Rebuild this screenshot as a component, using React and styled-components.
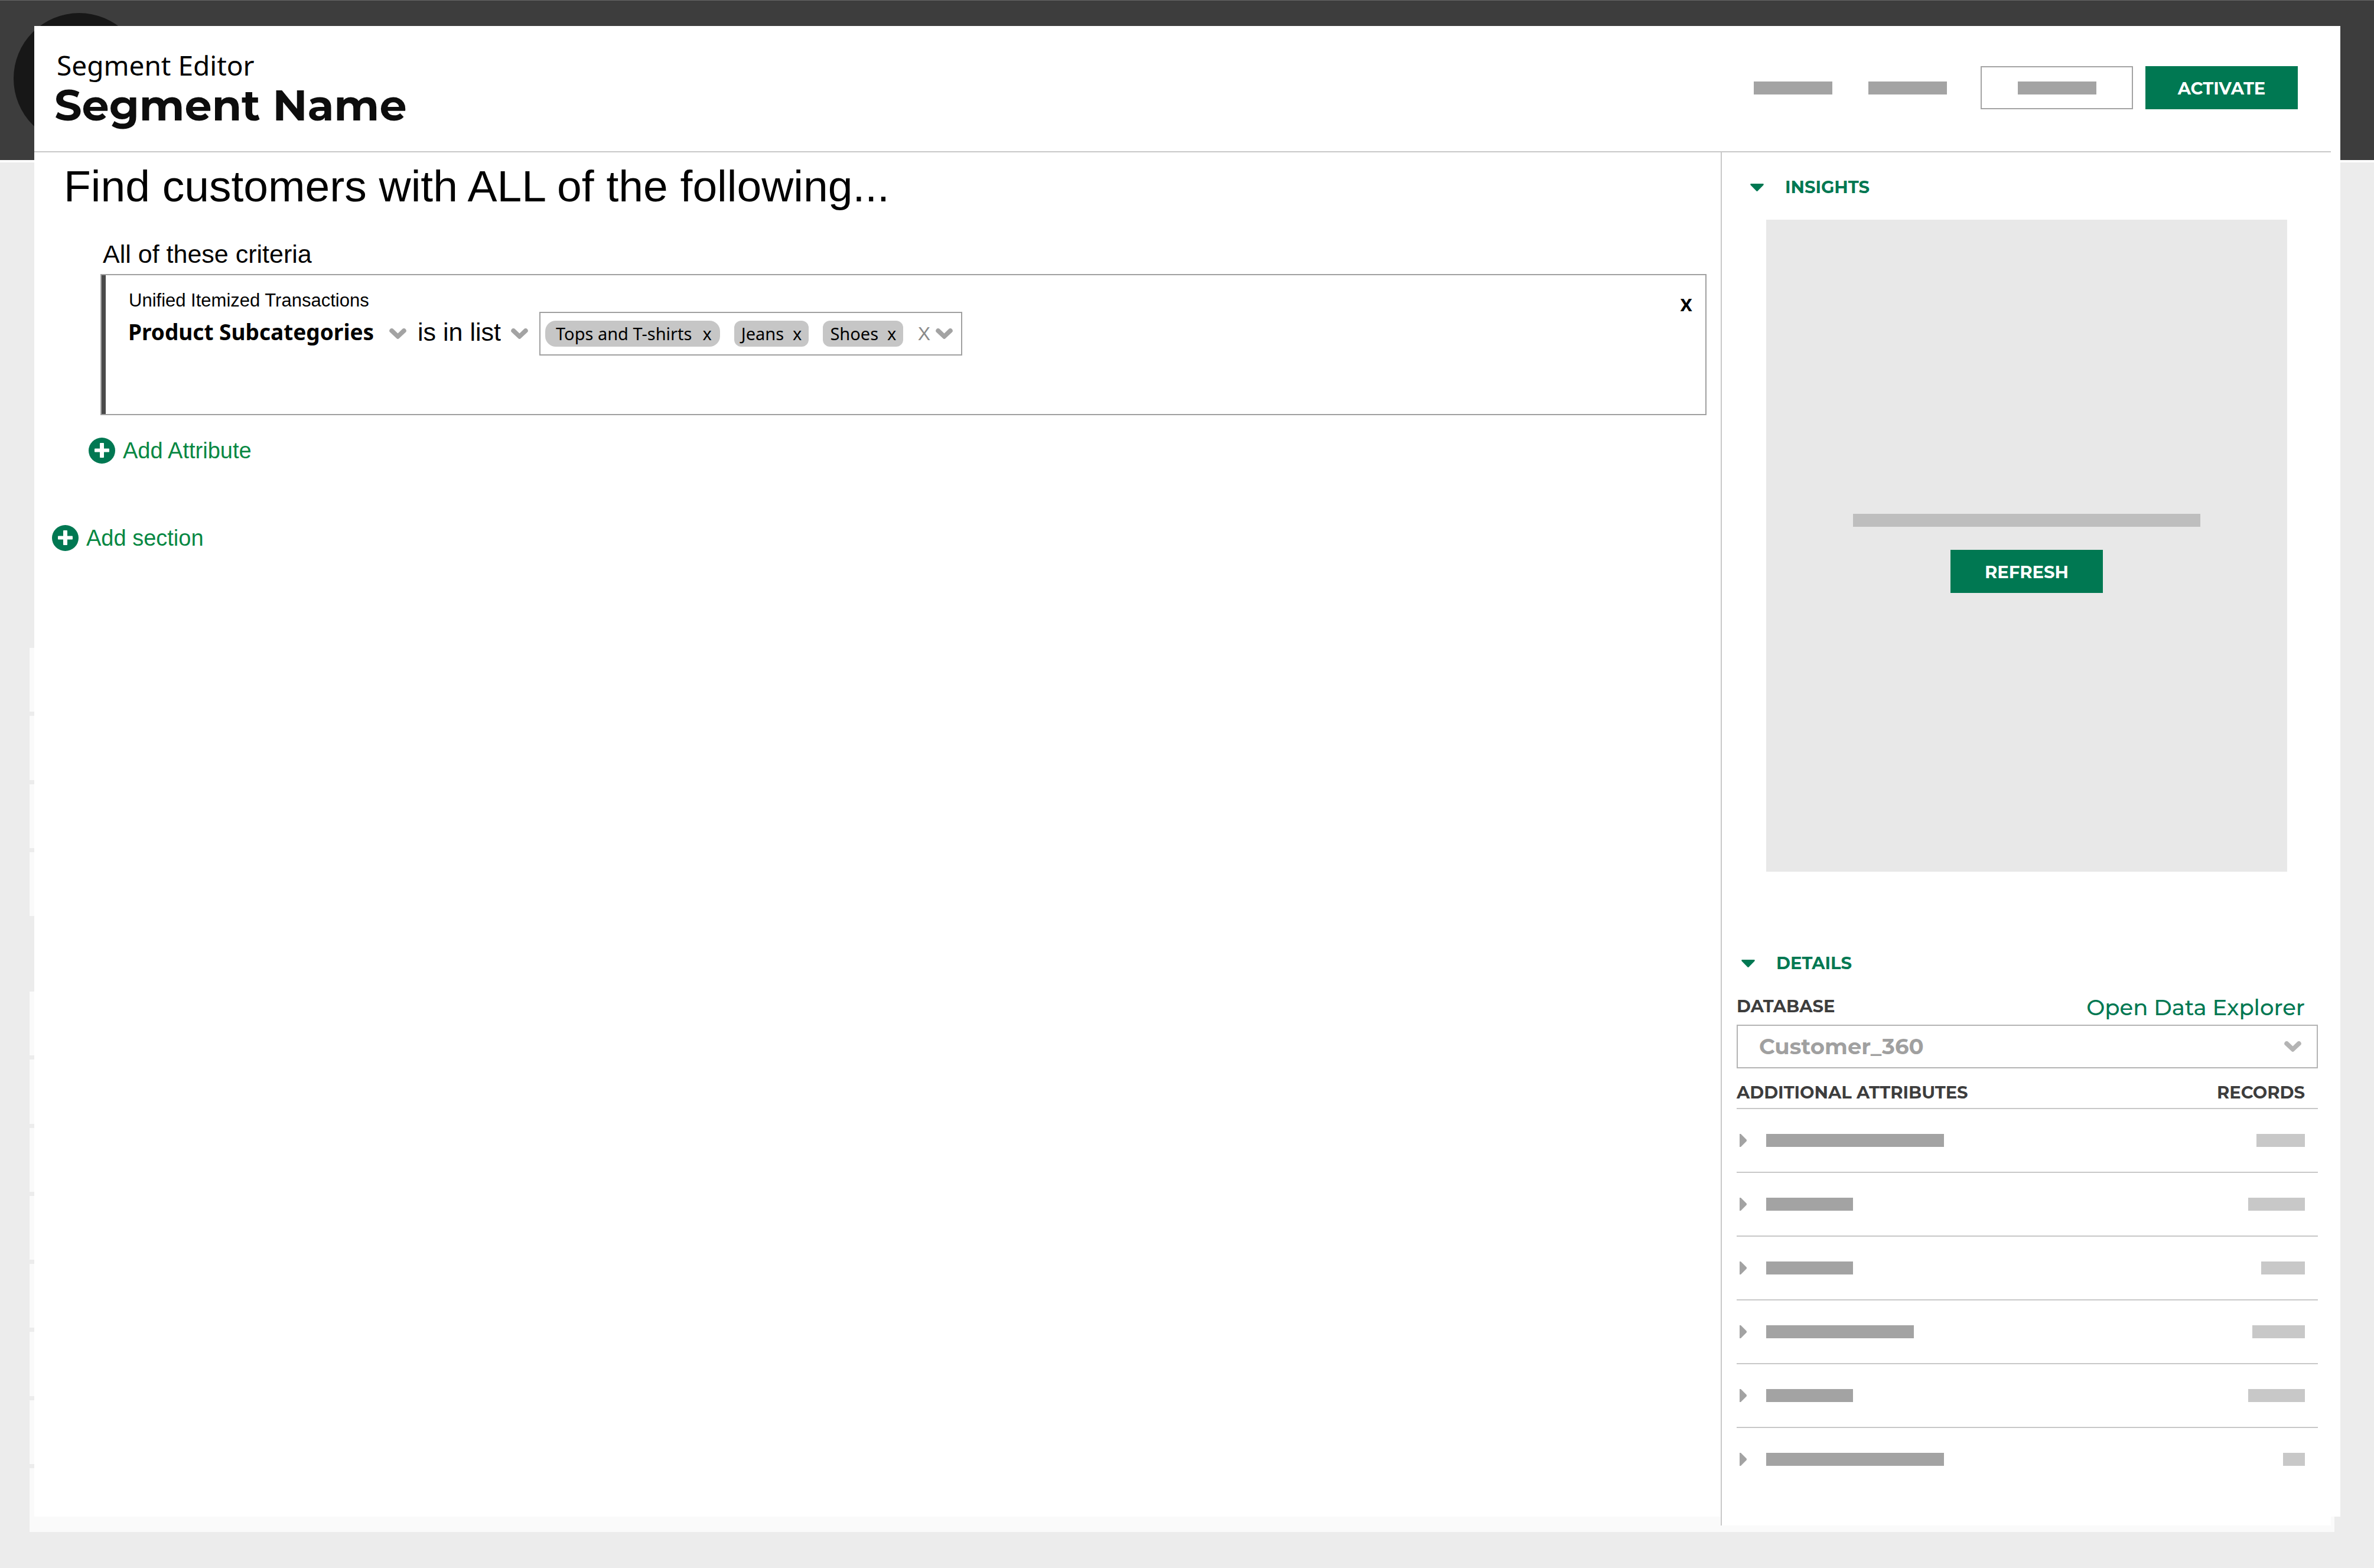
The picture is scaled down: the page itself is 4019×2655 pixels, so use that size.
import React, { useState } from "react";
import styled, { createGlobalStyle } from "styled-components";

const GREEN = "#007852";
const BRAND = `"Montserrat", "Inter", sans-serif`;
const HUMAN = `"Noto Sans", "Open Sans", sans-serif`;
const PLAIN = `"Liberation Sans", Arial, sans-serif`;

const GlobalStyle = createGlobalStyle`
  *, *::before, *::after { box-sizing: border-box; }
  body { margin: 0; background: #ececec; color: #000; font-family: ${PLAIN}; }
  h1, h2, h3, p { margin: 0; }
  button {
    padding: 0;
    border: 0;
    background: none;
    color: inherit;
    cursor: pointer;
  }
  svg { display: block; }
`;

/* ---------- page layers ---------- */

const Page = styled.div`
  display: grid;
  grid-template-columns: minmax(0, 1fr);
  min-height: 100vh;
  > * { grid-area: 1 / 1; }
`;

const Backdrop = styled.div`
  display: flex;
  flex-direction: column;
`;

const TopBar = styled.div`
  height: 275px;
  padding: 21px 23px 0;
  background: #3d3d3d;
  border-top: 1px solid #666;
  border-bottom: 4px solid #fff;
`;

const Avatar = styled.div`
  width: 222px;
  height: 222px;
  border-radius: 50%;
  background: #171717;
`;

const RowGroup = styled.div`
  display: grid;
  grid-auto-rows: 1fr;
  gap: 7px;
  height: ${(p) => p.$height}px;
  margin: ${(p) => p.$before}px 67px 0 50px;
`;

const BackRow = styled.div`
  background: #fafafa;
`;

const Modal = styled.div`
  display: flex;
  flex-direction: column;
  margin: 44px 57px 87px 58px;
  padding-right: 16px;
  background: #fff;
`;

/* ---------- header ---------- */

const Header = styled.header`
  display: flex;
  justify-content: space-between;
  height: 214px;
  padding: 35px 56px 0 34px;
  border-bottom: 2px solid #c8c8c8;
`;

const Eyebrow = styled.p`
  padding-left: 4px;
  font: 400 46px/62px ${HUMAN};
`;

const Title = styled.h1`
  font: 700 73px/74px ${BRAND};
  color: #0d0d0d;
`;

const Actions = styled.div`
  display: flex;
  gap: 21px;
  height: 73px;
  margin-top: 33px;
`;

const LinkActions = styled.div`
  display: flex;
  gap: 61px;
  padding-right: 36px;
`;

const Bar = styled.span`
  display: block;
  width: ${(p) => p.$width}px;
  height: 22px;
  background: ${(p) => p.$color || "#a3a3a3"};
`;

const OutlineButton = styled.button`
  display: flex;
  align-items: center;
  justify-content: center;
  width: 258px;
  border: 2px solid #a3a3a3;
`;

const SolidButton = styled.button`
  width: 258px;
  height: 73px;
  padding-top: 2px;
  background: ${GREEN};
  color: #fff;
  font: 700 29px/40px ${BRAND};
`;

/* ---------- editor ---------- */

const Body = styled.div`
  display: grid;
  grid-template-columns: minmax(0, 1fr) 1033px;
  flex: 1;
`;

const Editor = styled.main`
  padding: 12px 24px 0 0;
`;

const Heading = styled.h2`
  padding-left: 50px;
  font: 400 75px/90px ${PLAIN};
`;

const Section = styled.section`
  margin: 45px 0 104px 112px;
`;

const SectionLabel = styled.h3`
  padding-left: 4px;
  font: 400 43px/50px ${PLAIN};
`;

const Criteria = styled.div`
  display: flex;
  justify-content: space-between;
  align-items: flex-start;
  height: 239px;
  margin: 9px 0 38px;
  padding: 25px 22px 0 45px;
  border: 2px solid #a0a0a0;
  box-shadow: inset 7px 0 0 #4a4a4a;
`;

const Source = styled.p`
  margin-bottom: 1px;
  padding-left: 1px;
  font: 400 31px/36px ${PLAIN};
`;

const Rule = styled.div`
  display: flex;
  align-items: center;
  gap: 19px;
`;

const Picker = styled.label`
  display: grid;
  align-items: center;
  > * { grid-area: 1 / 1; }
  > svg { justify-self: end; pointer-events: none; }
`;

const PickerSelect = styled.select`
  appearance: none;
  margin: 0;
  padding: 0 ${(p) => (p.$strong ? 54 : 46)}px 6px 0;
  border: 0;
  background: none;
  color: #000;
  font: ${(p) => (p.$strong ? `700 37px/60px ${HUMAN}` : `400 43px/60px ${PLAIN}`)};
`;

const TokenField = styled.div`
  display: flex;
  align-items: center;
  gap: 24px;
  min-width: 716px;
  height: 74px;
  padding: 0 14px 0 8px;
  border: 2px solid #a0a0a0;
`;

const Token = styled.span`
  display: flex;
  align-items: center;
  gap: ${(p) => (p.$wide ? 18 : 15)}px;
  height: 44px;
  padding: ${(p) => (p.$wide ? "0 14px 0 18px" : "0 12px")};
  border-radius: ${(p) => (p.$wide ? 18 : 12)}px;
  background: #c6c6c6;
  font: 400 29px/40px ${HUMAN};
`;

const TokenRemove = styled.button`
  font: 400 29px/40px ${HUMAN};
`;

const FieldActions = styled.div`
  display: flex;
  align-items: center;
  gap: 9px;
  margin-left: auto;
`;

const ClearAll = styled.button`
  color: #8a8a8a;
  font: 400 32px/40px ${PLAIN};
`;

const CloseButton = styled.button`
  font: 600 37px/44px ${HUMAN};
`;

const AddButton = styled.button`
  display: flex;
  align-items: center;
  gap: 13px;
  margin-left: ${(p) => p.$indent}px;
  color: #078843;
  font: 400 38px/44px ${PLAIN};
`;

/* ---------- sidebar ---------- */

const Sidebar = styled.aside`
  margin-bottom: -15px;
  padding-top: 39px;
  background: #fff;
  border-left: 2px solid #c8c8c8;
`;

const Toggle = styled.button`
  display: flex;
  align-items: center;
  gap: 36px;
  margin-left: ${(p) => p.$indent}px;
  color: ${GREEN};
  font: 700 29px/40px ${BRAND};
`;

const InsightsPanel = styled.div`
  display: flex;
  flex-direction: column;
  align-items: center;
  gap: 39px;
  height: 1104px;
  margin: 35px 74px 135px 75px;
  padding-top: 498px;
  background: #e8e8e8;
`;

const Details = styled.section`
  padding: 0 22px 0 25px;
`;

const DatabaseHead = styled.div`
  display: flex;
  justify-content: space-between;
  align-items: flex-start;
  margin: 33px 0 7px;
  padding-right: 22px;
`;

const DatabaseLabel = styled.label`
  color: #3d3d3d;
  font: 700 29px/40px ${BRAND};
`;

const ExplorerLink = styled.a`
  color: ${GREEN};
  font: 500 37px/44px ${BRAND};
  text-decoration: none;
`;

const DatabaseField = styled.div`
  display: grid;
  align-items: center;
  > * { grid-area: 1 / 1; }
  > svg { justify-self: end; margin-right: 28px; pointer-events: none; }
`;

const DatabaseSelect = styled.select`
  appearance: none;
  width: 100%;
  height: 74px;
  padding: 0 80px 0 36px;
  border: 2px solid #b4b4b4;
  border-radius: 0;
  background: #fff;
  color: #a0a0a0;
  font: 700 37px/44px ${BRAND};
`;

const AttributeTable = styled.table`
  width: 100%;
  margin-top: 21px;
  border-spacing: 0;
`;

const HeadCell = styled.th`
  padding: 0 ${(p) => (p.$end ? 22 : 0)}px 6px 0;
  border-bottom: 2px solid #c8c8c8;
  color: #3d3d3d;
  font: 700 29px/40px ${BRAND};
  text-align: ${(p) => (p.$end ? "right" : "left")};
`;

const Cell = styled.td`
  height: 108px;
  padding: 0 ${(p) => (p.$end ? 22 : 0)}px 0 ${(p) => (p.$end ? 0 : 5)}px;
  border-bottom: 2px solid #c8c8c8;
  tr:last-child > & { border-bottom-color: transparent; }
`;

const CellContent = styled.div`
  display: flex;
  align-items: center;
  justify-content: ${(p) => (p.$end ? "flex-end" : "flex-start")};
  gap: 33px;
`;

/* ---------- icons ---------- */

const Chevron = ({ color = "#a3a3a3" }) => (
  <svg width="29" height="18" viewBox="0 0 29 18" aria-hidden="true">
    <path d="M1.2 1.6C2.8-.2 5.400-.4 7 1.200L14.500 8.600 22 1.200C23.600-.4 26.200-.2 27.800 1.600 29.400 3.400 29.200 5.200 27.800 6.600L16.600 17C15.400 18.200 13.600 18.200 12.400 17L1.200 6.600C-.2 5.200-.4 3.400 1.200 1.600Z" fill={color} />
  </svg>
);

const PlusCircle = () => (
  <svg width="45" height="44" viewBox="0 0 45 44" aria-hidden="true">
    <ellipse cx="22.500" cy="22" rx="22.500" ry="22" fill={GREEN} />
    <rect x="19" y="9" width="7" height="25" rx="1" fill="#fff" />
    <rect x="10" y="18.500" width="25" height="6" rx="1" fill="#fff" />
  </svg>
);

const TriangleDown = () => (
  <svg width="23" height="13" viewBox="0 0 23 13" aria-hidden="true">
    <path d="M1 0H22C23 .6 23 1.800 22.300 2.500L12.500 12.500C11.900 13.100 11.100 13.100 10.500 12.500L.7 2.500C0 1.800 0 .6 1 0Z" fill={GREEN} />
  </svg>
);

const Caret = () => (
  <svg width="12" height="22" viewBox="0 0 12 22" aria-hidden="true">
    <path d="M0 0H2L11.500 9.500C12.200 10.300 12.200 11.700 11.500 12.500L2 22H0Z" fill="#a3a3a3" />
  </svg>
);

/* ---------- data ---------- */

const ATTRIBUTES = [
  { name: 301, records: 82 },
  { name: 147, records: 96 },
  { name: 147, records: 74 },
  { name: 250, records: 89 },
  { name: 147, records: 96 },
  { name: 301, records: 37 },
];

const Rows = ({ count, height, before }) => (
  <RowGroup $height={height} $before={before}>
    {Array.from({ length: count }, (_, i) => (
      <BackRow key={i} />
    ))}
  </RowGroup>
);

export default function App() {
  const [tokens, setTokens] = useState(["Tops and T-shirts", "Jeans", "Shoes"]);

  return (
    <>
      <GlobalStyle />
      <Page>
        <Backdrop aria-hidden="true">
          <TopBar>
            <Avatar />
          </TopBar>
          <Rows count={4} height={454} before={822} />
          <Rows count={8} height={915} before={128} />
        </Backdrop>

        <Modal role="dialog" aria-labelledby="segment-title">
          <Header>
            <div>
              <Eyebrow>Segment Editor</Eyebrow>
              <Title id="segment-title">Segment Name</Title>
            </div>
            <Actions>
              <LinkActions>
                <button type="button" aria-label="Cancel">
                  <Bar $width={133} />
                </button>
                <button type="button" aria-label="Preview">
                  <Bar $width={133} />
                </button>
              </LinkActions>
              <OutlineButton type="button" aria-label="Save">
                <Bar $width={133} />
              </OutlineButton>
              <SolidButton type="button">ACTIVATE</SolidButton>
            </Actions>
          </Header>

          <Body>
            <Editor>
              <Heading>Find customers with ALL of the following...</Heading>
              <Section>
                <SectionLabel>All of these criteria</SectionLabel>
                <Criteria>
                  <div>
                    <Source>Unified Itemized Transactions</Source>
                    <Rule>
                      <Picker>
                        <PickerSelect $strong aria-label="Attribute">
                          <option>Product Subcategories</option>
                        </PickerSelect>
                        <Chevron />
                      </Picker>
                      <Picker>
                        <PickerSelect aria-label="Operator">
                          <option>is in list</option>
                        </PickerSelect>
                        <Chevron />
                      </Picker>
                      <TokenField>
                        {tokens.map((t) => (
                          <Token key={t} $wide={t.length > 10}>
                            {t}
                            <TokenRemove
                              type="button"
                              aria-label={`Remove ${t}`}
                              onClick={() => setTokens(tokens.filter((x) => x !== t))}
                            >
                              x
                            </TokenRemove>
                          </Token>
                        ))}
                        <FieldActions>
                          <ClearAll type="button" aria-label="Clear all" onClick={() => setTokens([])}>
                            X
                          </ClearAll>
                          <button type="button" aria-label="Open list">
                            <Chevron />
                          </button>
                        </FieldActions>
                      </TokenField>
                    </Rule>
                  </div>
                  <CloseButton type="button" aria-label="Remove criteria">
                    x
                  </CloseButton>
                </Criteria>
                <AddButton type="button" $indent={-20}>
                  <PlusCircle />
                  Add Attribute
                </AddButton>
              </Section>
              <AddButton type="button" $indent={30}>
                <PlusCircle />
                Add section
              </AddButton>
            </Editor>

            <Sidebar>
              <Toggle type="button" $indent={48} aria-expanded="true">
                <TriangleDown />
                INSIGHTS
              </Toggle>
              <InsightsPanel>
                <Bar $width={588} $color="#bebebe" />
                <SolidButton type="button">REFRESH</SolidButton>
              </InsightsPanel>

              <Details>
                <Toggle type="button" $indent={8} aria-expanded="true">
                  <TriangleDown />
                  DETAILS
                </Toggle>
                <DatabaseHead>
                  <DatabaseLabel htmlFor="database">DATABASE</DatabaseLabel>
                  <ExplorerLink href="#explorer">Open Data Explorer</ExplorerLink>
                </DatabaseHead>
                <DatabaseField>
                  <DatabaseSelect id="database">
                    <option>Customer_360</option>
                  </DatabaseSelect>
                  <Chevron color="#b4b4b4" />
                </DatabaseField>
                <AttributeTable>
                  <thead>
                    <tr>
                      <HeadCell scope="col">ADDITIONAL ATTRIBUTES</HeadCell>
                      <HeadCell scope="col" $end>
                        RECORDS
                      </HeadCell>
                    </tr>
                  </thead>
                  <tbody>
                    {ATTRIBUTES.map((a, i) => (
                      <tr key={i}>
                        <Cell>
                          <CellContent>
                            <Caret />
                            <Bar $width={a.name} />
                          </CellContent>
                        </Cell>
                        <Cell $end>
                          <CellContent $end>
                            <Bar $width={a.records} $color="#c8c8c8" />
                          </CellContent>
                        </Cell>
                      </tr>
                    ))}
                  </tbody>
                </AttributeTable>
              </Details>
            </Sidebar>
          </Body>
        </Modal>
      </Page>
    </>
  );
}
